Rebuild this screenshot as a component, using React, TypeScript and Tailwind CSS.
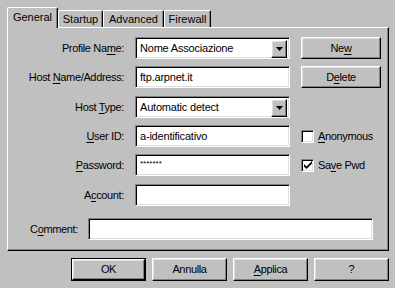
import React from "react";

const sunken =
  "border border-t-[#808080] border-l-[#808080] border-b-white border-r-white shadow-[inset_1px_1px_0_#000,inset_-1px_-1px_0_#dfdfdf] bg-white";
const raised =
  "border border-t-white border-l-white border-b-black border-r-black shadow-[inset_-1px_-1px_0_#808080,inset_1px_1px_0_#dfdfdf] bg-[#c0c0c0]";

function U({ children }: { children: React.ReactNode }) {
  return <span className="underline underline-offset-[2px] decoration-[1px]">{children}</span>;
}

function Label({ children }: { children: React.ReactNode }) {
  return <div className="text-right whitespace-nowrap">{children}</div>;
}

function Arrow() {
  return (
    <div className={`${raised} absolute right-[2px] top-[2px] w-[16px] h-[18px] flex items-center justify-center`}>
      <svg width="7" height="4" viewBox="0 0 7 4">
        <path d="M0 0H7L3.5 4Z" fill="#000" />
      </svg>
    </div>
  );
}

function Field({ text, combo, small }: { text?: string; combo?: boolean; small?: boolean }) {
  return (
    <div className={`${sunken} relative h-[22px] w-[155px] flex items-center pl-[4px]`}>
      <span className={small ? "text-[8px] tracking-[0px] leading-none pb-[3px]" : "tracking-[-0.2px]"}>{text}</span>
      {combo && <Arrow />}
    </div>
  );
}

function Button({ children, w = 80 }: { children: React.ReactNode; w?: number }) {
  return (
    <div
      className={`${raised} h-[22px] flex items-center justify-center`}
      style={{ width: w }}
    >
      {children}
    </div>
  );
}

function Check({ checked, children }: { checked?: boolean; children: React.ReactNode }) {
  return (
    <div className="flex items-center gap-[4px]">
      <div className={`${sunken} w-[13px] h-[13px] flex items-center justify-center`}>
        {checked && (
          <svg width="8" height="8" viewBox="0 0 8 8">
            <path d="M0 3L2.5 5.5L8 0V2.5L2.5 8L0 5.5Z" fill="#000" />
          </svg>
        )}
      </div>
      <span>{children}</span>
    </div>
  );
}

function Row({ mt, label, field, right }: { mt: string; label: React.ReactNode; field: React.ReactNode; right?: React.ReactNode }) {
  return (
    <div className={`${mt} grid grid-cols-[116px_155px_80px] gap-x-[11px] items-center h-[22px]`}>
      <Label>{label}</Label>
      {field}
      <div>{right}</div>
    </div>
  );
}

function Tab({ label, w, selected }: { label: string; w: number; selected?: boolean }) {
  if (selected) {
    return (
      <div
        className="relative z-10 -mb-[1px] h-[21px] bg-[#c0c0c0] border-t border-l border-r border-t-white border-l-white border-r-black rounded-t-[2px] shadow-[inset_-1px_0_0_#808080] flex items-center justify-center pb-[2px] tracking-[0px]"
        style={{ width: w }}
      >
        {label}
      </div>
    );
  }
  return (
    <div
      className="h-[17px] bg-[#c0c0c0] border-t border-l border-r border-t-white border-l-white border-r-black rounded-t-[2px] shadow-[inset_-1px_0_0_#808080] flex items-center justify-center tracking-[0px]"
      style={{ width: w }}
    >
      {label}
    </div>
  );
}

export default function App() {
  return (
    <div
      className="w-[395px] h-[288px] bg-[#c0c0c0] text-black text-[11px] tracking-[-0.35px] leading-none overflow-hidden"
      style={{ fontFamily: '"Liberation Sans", Arial, sans-serif' }}
    >
      <div className="pt-[7px] pl-[7px] flex items-end h-[27px]">
        <Tab label="General" w={51} selected />
        <Tab label="Startup" w={45} />
        <Tab label="Advanced" w={61} />
        <Tab label="Firewall" w={47} />
      </div>
      <div className="ml-[7px] w-[382px] h-[224px] border border-t-white border-l-white border-b-black border-r-black shadow-[inset_-1px_-1px_0_#808080] pt-[9px]">
        <Row
          mt="mt-0"
          label={<>Profile Na<U>m</U>e:</>}
          field={<Field text="Nome Associazione" combo />}
          right={<Button>Ne<U>w</U></Button>}
        />
        <Row
          mt="mt-[7px]"
          label={<>Host <U>N</U>ame/Address:</>}
          field={<Field text="ftp.arpnet.it" />}
          right={<Button>D<U>e</U>lete</Button>}
        />
        <Row
          mt="mt-[8px]"
          label={<>Host <U>T</U>ype:</>}
          field={<Field text="Automatic detect" combo />}
        />
        <Row
          mt="mt-[7px]"
          label={<><U>U</U>ser ID:</>}
          field={<Field text="a-identificativo" />}
          right={<Check><U>A</U>nonymous</Check>}
        />
        <Row
          mt="mt-[7px]"
          label={<><U>P</U>assword:</>}
          field={<Field text="*******" small />}
          right={<Check checked>Sa<U>v</U>e Pwd</Check>}
        />
        <Row
          mt="mt-[8px]"
          label={<>A<U>c</U>count:</>}
          field={<Field />}
        />
        <div className="mt-[12px] flex items-center gap-[10px] h-[22px]">
          <div className="w-[70px] text-right">C<U>o</U>mment:</div>
          <div className={`${sunken} h-[22px] w-[285px]`} />
        </div>
      </div>
      <div className="mt-[7px] pl-[71px] flex gap-[6px]">
        <div className="w-[75px] h-[23px] border border-black">
          <div className={`${raised} w-full h-full flex items-center justify-center`}>OK</div>
        </div>
        <div className={`${raised} w-[75px] h-[23px] flex items-center justify-center`}>Annulla</div>
        <div className={`${raised} w-[75px] h-[23px] flex items-center justify-center`}>
          <span><U>A</U>pplica</span>
        </div>
        <div className={`${raised} w-[75px] h-[23px] flex items-center justify-center`}>?</div>
      </div>
    </div>
  );
}
